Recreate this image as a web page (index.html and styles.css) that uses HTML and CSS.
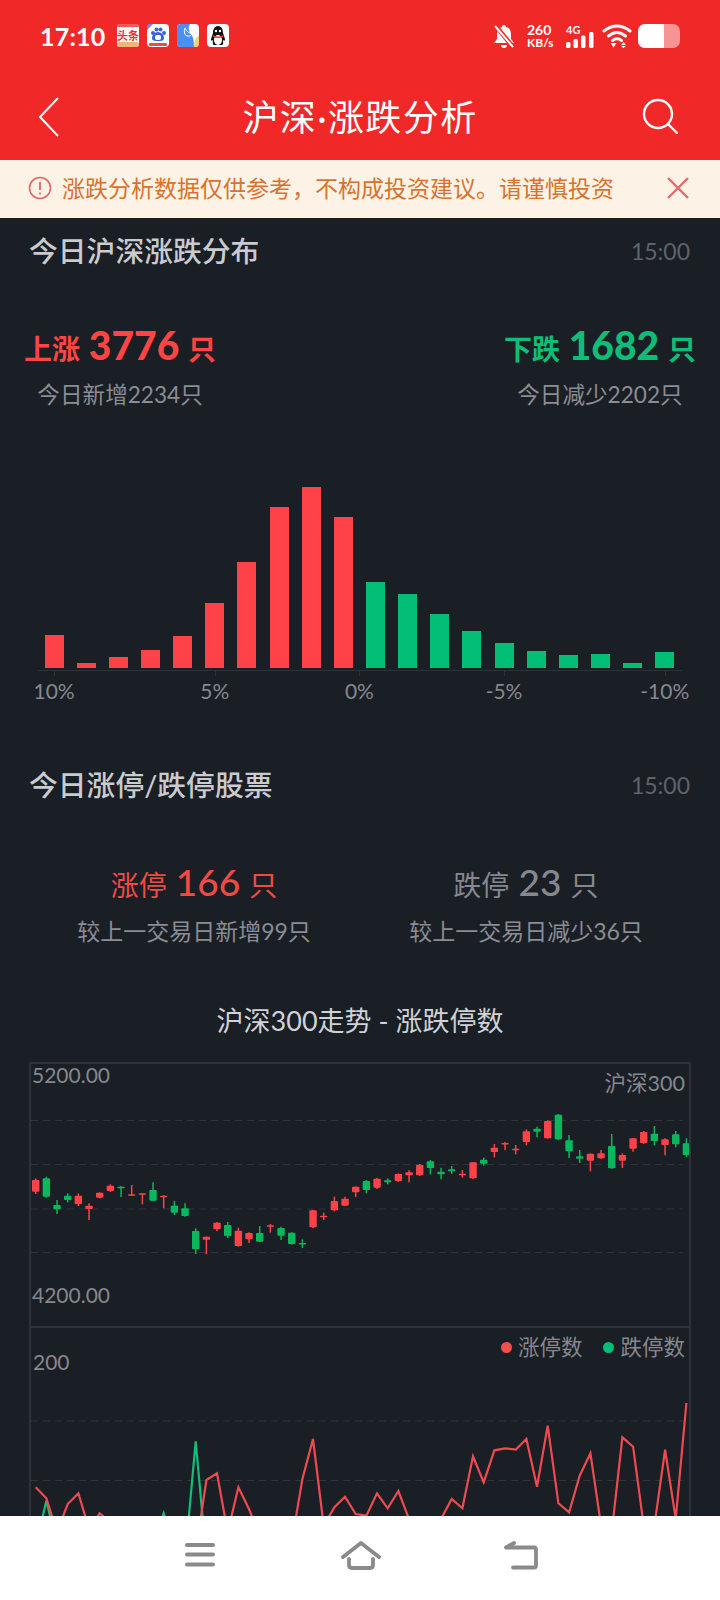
FILE: index.html
```html
<!DOCTYPE html>
<html lang="zh-CN">
<head>
  <meta charset="UTF-8" />
  <meta name="viewport" content="width=device-width, initial-scale=1.0"/>
  <title>沪深·涨跌分析</title>
  <link rel="stylesheet" href="styles.css">
</head>
<body>

<div class="pagina">
  <header class="cabecera">
    <div class="status">
      <span class="hora">17:10</span>
      <div class="apps">
        <svg class="app" viewBox="0 0 22 23">
          <rect width="22" height="23" rx="4" fill="#fff"/>
          <rect width="22" height="3" rx="1.500" fill="#f05a5a"/>
          <rect y="18" width="22" height="5" rx="2" fill="#f3b27a"/>
          <text x="11" y="15.500" class="app-texto">头条</text>
        </svg>
        <svg class="app" viewBox="0 0 22 23">
          <rect width="22" height="23" rx="4" fill="#fff"/>
          <circle cx="6" cy="9" r="2" fill="#3a62e0"/>
          <circle cx="9.500" cy="5.500" r="2" fill="#3a62e0"/>
          <circle cx="13.500" cy="5.500" r="2" fill="#3a62e0"/>
          <circle cx="17" cy="9" r="2" fill="#3a62e0"/>
          <path d="M11 8c-3 0-6 3-6 6 0 3 3 3 6 3s6 0 6-3c0-3-3-6-6-6z" fill="#3a62e0"/>
          <rect x="8" y="11" width="6" height="5" rx="2" fill="#fff"/>
          <rect x="2" y="19" width="18" height="3" rx="1" fill="#ef4a4a"/>
          <path d="M0 6L6 0H3Q0 0 0 3z" fill="#6f7bf0"/>
        </svg>
        <svg class="app" viewBox="0 0 22 23">
          <rect width="22" height="23" rx="4" fill="#fff"/>
          <path d="M0 4Q0 0 4 0H13Q10 5 14 10Q17 13 17 23H4Q0 23 0 19z" fill="#4a90f0"/>
          <path d="M17 23Q17 13 22 12V19Q22 23 18 23z" fill="#f4d27c"/>
          <path d="M8 4Q6 10 10 12Q14 13 15 9Q11 10 8 4z" fill="none" stroke="#fff" stroke-width="1"/>
        </svg>
        <svg class="app" viewBox="0 0 22 23">
          <rect width="22" height="23" rx="4" fill="#fff"/>
          <path d="M11 2C7 2 6 6 6 9L4 15C4 17 5 17 6 16C6 19 5 21 8 21H14C17 21 16 19 16 16C17 17 18 17 18 15L16 9C16 6 15 2 11 2z" fill="#111"/>
          <ellipse cx="11" cy="16" rx="4" ry="5" fill="#fff"/>
          <path d="M6 11Q11 14 16 11L16 13Q11 15 6 13z" fill="#e8322a"/>
          <circle cx="9" cy="7" r="1.200" fill="#fff"/>
          <circle cx="13" cy="7" r="1.200" fill="#fff"/>
        </svg>
      </div>
      <div class="status-der">
        <svg class="campana" viewBox="0 0 20 24">
          <path d="M10 1a2 2 0 0 1 2 2c4 1 5 4 5 8v4l3 4H0l3-4v-4c0-4 1-7 5-8a2 2 0 0 1 2-2zM7 21h6a3 3 0 0 1-6 0z" fill="#fff"/>
          <path d="M1 1L19 23" stroke="#f02828" stroke-width="4.500"/>
          <path d="M1 2L19 23" stroke="#fff" stroke-width="2"/>
        </svg>
        <div class="velocidad"><b>260</b><b class="kb">KB/s</b></div>
        <div class="senal">
          <span class="cuatro-g">4G</span>
          <svg width="28" height="16" viewBox="0 0 28 16">
            <rect x="0" y="10" width="4.500" height="6" rx="1.500" fill="#fff"/>
            <rect x="7.500" y="7" width="4.500" height="9" rx="1.500" fill="#fff"/>
            <rect x="15" y="3.500" width="4.500" height="12.500" rx="1.500" fill="#fff"/>
            <rect x="23" y="0" width="4.500" height="16" rx="1.500" fill="#fff"/>
          </svg>
        </div>
        <svg class="wifi" viewBox="0 0 30 24">
          <path d="M2 7Q15 -3 28 7M6.500 12Q15 5 23.500 12M10.500 16.500Q15 13 19.500 16.500" fill="none" stroke="#fff" stroke-width="3" stroke-linecap="round"/>
          <path d="M8.500 19h6l-3 4.500zM19 21l2.500-3 2.500 3zM19 22h5l-2.500 2z" fill="#fff"/>
        </svg>
        <div class="bateria"><div class="bateria-nivel"></div></div>
      </div>
    </div>
    <nav class="barra">
      <svg class="atras" viewBox="0 0 22 40"><path d="M20 1L2 20L20 39" fill="none" stroke="#fff" stroke-width="2"/></svg>
      <h1>沪深·涨跌分析</h1>
      <svg class="lupa" viewBox="0 0 36 36">
        <circle cx="16" cy="16" r="14" fill="none" stroke="#fff" stroke-width="2.400"/>
        <path d="M26 26L35 35" stroke="#fff" stroke-width="2.400" stroke-linecap="round"/>
      </svg>
    </nav>
  </header>

  <div class="aviso">
    <svg class="aviso-icono" viewBox="0 0 24 24">
      <circle cx="12" cy="12" r="10.500" fill="none" stroke="#e0686a" stroke-width="1.600"/>
      <path d="M12 6v8M12 16.500v2" stroke="#e0686a" stroke-width="1.800"/>
    </svg>
    <span class="aviso-texto">涨跌分析数据仅供参考，不构成投资建议。请谨慎投资</span>
    <svg class="aviso-cerrar" viewBox="0 0 24 24"><path d="M2 2L22 22M22 2L2 22" stroke="#e76a6a" stroke-width="2.400"/></svg>
  </div>

  <main class="contenido">
    <section>
      <div class="seccion-titulo">
        <h2>今日沪深涨跌分布</h2>
        <span class="hora-dato">15:00</span>
      </div>
      <div class="resumen">
        <div class="lado">
          <div class="lado-total sube">上涨 <b>3776</b> 只</div>
          <div class="lado-nota">今日新增2234只</div>
        </div>
        <div class="lado">
          <div class="lado-total baja">下跌 <b>1682</b> 只</div>
          <div class="lado-nota">今日减少2202只</div>
        </div>
      </div>
      <div class="distribucion" id="distribucion"></div>
      <div class="eje">
        <span class="eje-label col-1">10%</span>
        <span class="eje-label col-6">5%</span>
        <span class="eje-label col-10">0%</span>
        <span class="eje-label col-15">-5%</span>
        <span class="eje-label col-20">-10%</span>
      </div>
    </section>

    <section class="seccion-limite">
      <div class="seccion-titulo">
        <h2>今日涨停/跌停股票</h2>
        <span class="hora-dato">15:00</span>
      </div>
      <div class="limites">
        <div class="limite">
          <div class="limite-total rojo">涨停 <b>166</b> 只</div>
          <div class="lado-nota">较上一交易日新增99只</div>
        </div>
        <div class="limite">
          <div class="limite-total gris">跌停 <b>23</b> 只</div>
          <div class="lado-nota">较上一交易日减少36只</div>
        </div>
      </div>
      <h3 class="grafico-titulo">沪深300走势 - 涨跌停数</h3>
      <div class="grafico">
        <div class="panel panel-velas">
          <span class="etiqueta arriba-izq">5200.00</span>
          <span class="etiqueta arriba-der">沪深300</span>
          <span class="etiqueta abajo-izq">4200.00</span>
          <svg id="velas" class="lienzo" width="658" height="262"></svg>
        </div>
        <div class="panel panel-lineas">
          <span class="etiqueta valor-200">200</span>
          <div class="leyenda">
            <span class="punto punto-rojo"></span>涨停数
            <span class="punto punto-verde"></span>跌停数
          </div>
          <svg id="lineas" class="lienzo" width="658" height="300"></svg>
        </div>
      </div>
    </section>
  </main>

  <footer class="navegacion">
    <svg class="nav-icono" width="32" height="26" viewBox="0 0 32 26">
      <path d="M3 4h26M3 13.500h26M3 23.500h26" stroke="#8a8a8a" stroke-width="4" stroke-linecap="round"/>
    </svg>
    <svg class="nav-icono" width="40" height="30" viewBox="0 0 40 30">
      <path d="M2 16L20 2L38 16" fill="none" stroke="#8a8a8a" stroke-width="3.800" stroke-linecap="round" stroke-linejoin="round"/>
      <path d="M8 18v6q0 3 3 3h18q3 0 3-3v-6" fill="none" stroke="#8a8a8a" stroke-width="3.800" stroke-linecap="round"/>
    </svg>
    <svg class="nav-icono" width="34" height="30" viewBox="0 0 34 30">
      <path d="M10 2L2 6.500h28q2 0 2 2v16q0 2-2 2H9" fill="none" stroke="#8a8a8a" stroke-width="3.800" stroke-linecap="round" stroke-linejoin="round"/>
    </svg>
  </footer>
</div>

<script src="script.js"></script>

</body>
</html>
```

FILE: styles.css
```css
* {
  box-sizing: border-box;
}

body {
  margin: 0;
  font-family: "Lato", "Noto Sans CJK SC", sans-serif;
  background: #1a1e25;
  color: #c7c9cc;
}

.pagina {
  width: 720px;
  height: 1600px;
  display: flex;
  flex-direction: column;
  overflow: hidden;
}

.cabecera {
  height: 160px;
  background: #f02828;
  color: #fff;
  flex-shrink: 0;
}

.status {
  height: 71px;
  padding: 0 40px;
  display: flex;
  align-items: center;
}

.hora {
  font-size: 25px;
  font-weight: 700;
  width: 77px;
  letter-spacing: 0.2px;
}

.apps {
  display: flex;
  gap: 8px;
}

.app {
  width: 22px;
  height: 23px;
}

.app-texto {
  font-size: 11px;
  font-weight: 700;
  fill: #e8322a;
  text-anchor: middle;
}

.status-der {
  margin-left: auto;
  display: flex;
  align-items: center;
}

.campana {
  width: 20px;
  height: 24px;
  margin-right: 13px;
}

.velocidad {
  display: flex;
  flex-direction: column;
  width: 39px;
  font-size: 14px;
  line-height: 13px;
}

.velocidad .kb {
  font-size: 12px;
}

.senal {
  display: flex;
  flex-direction: column;
  width: 28px;
  height: 24px;
  position: relative;
  margin-right: 8px;
}

.cuatro-g {
  font-size: 11px;
  font-weight: 700;
  line-height: 11px;
}

.senal svg {
  position: absolute;
  left: 0;
  top: 8px;
}

.wifi {
  width: 30px;
  height: 24px;
  margin-right: 6px;
}

.bateria {
  width: 42px;
  height: 24px;
  border-radius: 7px;
  background: rgba(255, 255, 255, 0.5);
  overflow: hidden;
}

.bateria-nivel {
  width: 26px;
  height: 100%;
  background: #fff;
}

.barra {
  height: 89px;
  padding-top: 3px;
  display: flex;
  align-items: center;
  justify-content: center;
  position: relative;
}

.barra h1 {
  margin: 0;
  font-size: 36px;
  font-weight: 400;
  line-height: 44px;
  letter-spacing: 1.4px;
}

.atras {
  position: absolute;
  left: 38px;
  top: 26px;
  width: 22px;
  height: 40px;
}

.lupa {
  position: absolute;
  right: 42px;
  top: 27px;
  width: 36px;
  height: 36px;
}

.aviso {
  height: 58px;
  background: #fdf2e6;
  display: flex;
  align-items: center;
  padding-left: 28px;
  padding-bottom: 2px;
  flex-shrink: 0;
}

.aviso-icono {
  width: 24px;
  height: 24px;
  margin-right: 10px;
}

.aviso-texto {
  font-size: 23px;
  color: #d9722c;
  white-space: nowrap;
  margin-bottom: 2px;
}

.aviso-cerrar {
  width: 24px;
  height: 24px;
  margin-left: 52px;
}

.contenido {
  flex: 1;
  overflow: hidden;
}

.seccion-titulo {
  display: flex;
  justify-content: space-between;
  align-items: center;
  padding: 13px 30px 0 29px;
  height: 53px;
}

.seccion-titulo h2 {
  margin: 0;
  font-size: 28.800px;
  font-weight: 500;
  color: #c9cbce;
  line-height: 40px;
}

.hora-dato {
  font-size: 23px;
  color: #5f636a;
}

.resumen {
  display: flex;
  justify-content: space-between;
  padding: 0 24px;
  margin-top: 49px;
}

.lado {
  text-align: center;
}

.lado-total {
  font-size: 28px;
  font-weight: 700;
  line-height: 50px;
  white-space: nowrap;
}

.lado-total b {
  font-size: 39px;
  margin: 0 2px;
}

.sube {
  color: #ff4444;
}

.baja {
  color: #0fbd76;
}

.lado-nota {
  font-size: 22.600px;
  color: #8a8d93;
  line-height: 30px;
  margin-top: 6px;
}

.distribucion {
  display: grid;
  grid-template-columns: repeat(20, 32.15px);
  align-items: end;
  justify-items: center;
  height: 184px;
  margin: 77px 0 0 38px;
  width: 644px;
  padding-bottom: 3px;
  border-bottom: 1px solid #2e333b;
}

.barra-dato {
  width: 19px;
}

.barra-dato.roja {
  background: #ff4148;
}

.barra-dato.verde {
  background: #02bf75;
}

.eje {
  display: grid;
  grid-template-columns: repeat(20, 32.15px);
  margin-left: 38px;
  width: 644px;
  height: 36px;
}

.eje-label {
  justify-self: center;
  font-size: 21px;
  color: #85888e;
  line-height: 30px;
  padding-top: 5px;
  position: relative;
  white-space: nowrap;
}

.eje-label::before {
  content: "";
  position: absolute;
  top: 0;
  left: 50%;
  width: 1px;
  height: 5px;
  background: #2e333b;
}

.col-1 { grid-column: 1; }
.col-6 { grid-column: 6; }
.col-10 { grid-column: 10 / span 2; }
.col-15 { grid-column: 15; }
.col-20 { grid-column: 20; }

.seccion-limite {
  margin-top: 45px;
}

.limites {
  display: grid;
  grid-template-columns: 332px 332px;
  padding-left: 28px;
  margin-top: 52px;
}

.limite {
  text-align: center;
}

.limite-total {
  font-size: 28px;
  line-height: 50px;
  white-space: nowrap;
}

.limite-total b {
  font-size: 37px;
  font-weight: 500;
  margin: 0 2px;
}

.limite .lado-nota {
  font-size: 23px;
  margin-top: 6px;
}

.rojo {
  color: #ee4b45;
}

.gris {
  color: #85888e;
}

.grafico-titulo {
  margin: 55px 0 0;
  text-align: center;
  font-size: 27px;
  font-weight: 400;
  line-height: 40px;
  color: #d0d2d5;
}

.grafico {
  margin: 21px 0 0 29px;
  width: 662px;
  height: 600px;
  border: 2px solid #2e333b;
  border-radius: 2px;
}

.panel {
  position: relative;
}

.panel-velas {
  height: 264px;
  border-bottom: 2px solid #2e333b;
}

.lienzo {
  display: block;
}

.etiqueta {
  position: absolute;
  font-size: 21px;
  line-height: 28px;
  color: #85888e;
}

.arriba-izq {
  left: 1px;
  top: -3px;
}

.arriba-der {
  right: 4px;
  top: 5px;
  font-size: 21.500px;
}

.abajo-izq {
  left: 1px;
  top: 217px;
}

.valor-200 {
  left: 2px;
  top: 20px;
}

.leyenda {
  position: absolute;
  right: 4px;
  top: 5px;
  font-size: 21.500px;
  line-height: 28px;
  color: #85888e;
  display: flex;
  align-items: center;
}

.punto {
  width: 11px;
  height: 11px;
  border-radius: 50%;
  margin: 0 6px 0 21px;
}

.punto-rojo {
  background: #f4504a;
}

.punto-verde {
  background: #02bf75;
}

.navegacion {
  height: 84px;
  background: #fff;
  flex-shrink: 0;
  display: flex;
  align-items: flex-start;
  padding-left: 184px;
  padding-top: 25px;
}

.nav-icono:nth-child(2) {
  margin-left: 125px;
}

.nav-icono:nth-child(3) {
  margin-left: 123px;
}
```

FILE: script.js
```js
const rojoVela = "#ff4148";
const verdeVela = "#09b85c";

// Barras de la distribucion, de 10% a -10%
const alturas = [33, 5, 11, 18, 32, 65, 106, 161, 181, 151, 86, 74, 54, 37, 25, 17, 13, 14, 5, 16];

const distribucion = document.getElementById("distribucion");
alturas.forEach((alto, i) => {
  const barra = document.createElement("div");
  barra.className = "barra-dato " + (i < 10 ? "roja" : "verde");
  barra.style.height = alto + "px";
  distribucion.appendChild(barra);
});

// alto, apertura, cierre, bajo, color ("r" o "v")
const velas = [
  [385, 390, 425, 432, "r"], [380, 385, 440, 443, "v"], [450, 465, 478, 492, "v"], [430, 437, 450, 457, "v"],
  [430, 437, 462, 468, "r"], [460, 467, 477, 510, "r"], [427, 428, 443, 445, "r"], [403, 407, 423, 426, "r"],
  [408, 410, 415, 441, "v"], [405, 433, 437, 438, "r"], [430, 430, 434, 463, "r"], [397, 420, 452, 453, "v"],
  [436, 437, 441, 475, "r"], [453, 467, 488, 495, "v"], [460, 475, 498, 500, "v"], [535, 543, 597, 612, "v"],
  [560, 560, 569, 613, "r"], [516, 518, 538, 543, "r"], [516, 525, 558, 564, "v"], [533, 542, 588, 590, "r"],
  [547, 549, 568, 579, "r"], [528, 549, 575, 576, "v"], [522, 526, 530, 548, "r"], [530, 534, 557, 570, "v"],
  [547, 548, 582, 584, "v"], [568, 579, 582, 594, "v"], [480, 481, 532, 535, "r"], [488, 497, 501, 510, "r"],
  [440, 453, 481, 484, "r"], [440, 446, 467, 469, "r"], [409, 410, 427, 441, "r"], [390, 393, 420, 430, "v"],
  [383, 386, 413, 417, "r"], [385, 391, 397, 403, "v"], [370, 372, 393, 396, "r"], [361, 367, 376, 397, "r"],
  [342, 345, 376, 378, "r"], [330, 334, 354, 373, "v"], [353, 365, 373, 388, "v"], [348, 358, 364, 372, "v"],
  [360, 371, 376, 383, "r"], [336, 337, 385, 387, "r"], [323, 329, 341, 347, "v"], [282, 293, 306, 322, "r"],
  [276, 279, 283, 301, "r"], [285, 296, 300, 313, "r"], [238, 244, 276, 286, "r"], [230, 236, 245, 262, "v"],
  [211, 213, 265, 266, "r"], [192, 194, 268, 270, "v"], [255, 271, 304, 324, "v"], [300, 319, 326, 339, "v"],
  [310, 311, 332, 364, "r"], [300, 310, 325, 327, "r"], [252, 288, 355, 356, "v"], [310, 315, 332, 354, "r"],
  [264, 265, 296, 305, "r"], [243, 246, 279, 282, "r"], [228, 251, 273, 286, "v"], [265, 268, 285, 316, "r"],
  [243, 253, 283, 292, "v"], [265, 280, 315, 321, "v"]
];

const lineaRoja = [
  505, 538, 640, 555, 523, 630, 583, 610, 650, 650, 650, 650, 650, 650, 650, 700,
  483, 463, 640, 505, 570, 650, 650, 650, 670, 480, 360, 620, 565, 533, 585, 590,
  523, 568, 516, 600, 640, 640, 600, 540, 568, 412, 490, 394, 388, 392, 360, 503,
  320, 553, 580, 470, 403, 620, 640, 355, 383, 620, 620, 392, 600, 252
];

const lineaVerde = lineaRoja.map(() => 680);
lineaVerde[1] = 545;
lineaVerde[12] = 583;
lineaVerde[14] = 720;
lineaVerde[15] = 367;
lineaVerde[16] = 720;

const xVela = i => 4.7 + i * 10.667;
const yVela = v => v / 3 - 14;
const yLinea = v => v / 3 - 9;

function rejilla(ys) {
  return ys.map(y => `<line x1="0" x2="652" y1="${y}" y2="${y}" stroke="#30343b" stroke-width="1" stroke-dasharray="7 5"/>`).join("");
}

let svgVelas = rejilla([56.5, 100.5, 145, 188.5]);
velas.forEach(([alto, ape, cie, bajo, tipo], i) => {
  const color = tipo === "r" ? rojoVela : verdeVela;
  const x = xVela(i);
  svgVelas += `<line x1="${x}" x2="${x}" y1="${yVela(alto)}" y2="${yVela(bajo)}" stroke="${color}" stroke-width="1.500"/>`;
  svgVelas += `<rect x="${x - 3.7}" y="${yVela(ape)}" width="7.400" height="${Math.max(yVela(cie) - yVela(ape), 1.500)}" rx="0.800" fill="${color}"/>`;
});
document.getElementById("velas").innerHTML = svgVelas;

function puntos(valores) {
  return valores.map((v, i) => `${xVela(i).toFixed(1)},${yLinea(v).toFixed(1)}`).join(" ");
}

document.getElementById("lineas").innerHTML =
  rejilla([93, 152.5]) +
  `<polyline points="${puntos(lineaVerde)}" fill="none" stroke="#12bd78" stroke-width="2.200"/>` +
  `<polyline points="${puntos(lineaRoja)}" fill="none" stroke="#ee4b50" stroke-width="2.200"/>`;
```
